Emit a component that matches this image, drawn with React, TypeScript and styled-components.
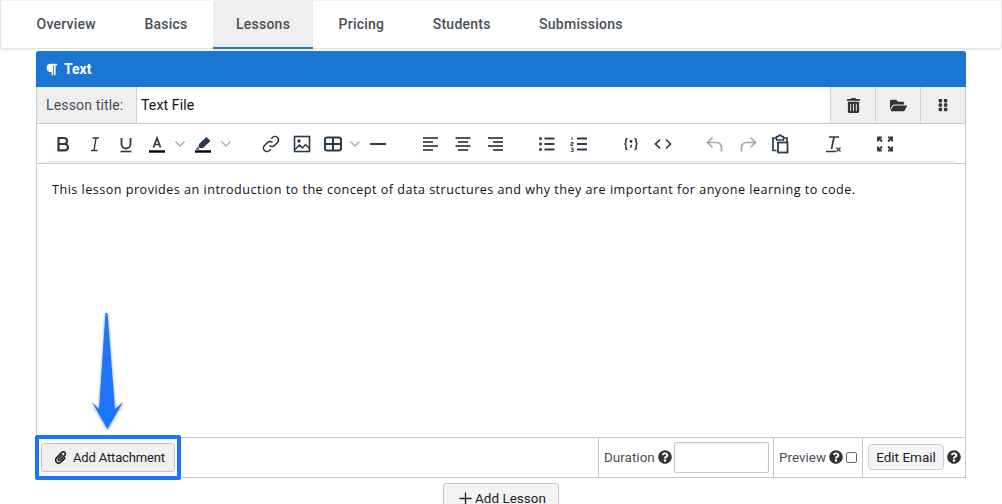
import React from "react";
import styled, { createGlobalStyle } from "styled-components";
import {
  FaFolderOpen,
  FaGripVertical,
  FaParagraph,
  FaPaperclip,
  FaQuestionCircle,
  FaTrashAlt,
} from "react-icons/fa";
import { Plus } from "lucide-react";

const GlobalStyle = createGlobalStyle`
  html, body {
    margin: 0;
    padding: 0;
    background: #fff;
    overflow: hidden;
  }
  body {
    font-family: Roboto, "Liberation Sans", sans-serif;
    color: #212529;
  }
`;

const INK = "#2c3a4b";

const Svg = ({ children, w = 24 }: { children: React.ReactNode; w?: number }) => (
  <svg width={w} height={24} viewBox={`0 0 ${w} 24`} fill="none" stroke={INK} strokeWidth={2}>
    {children}
  </svg>
);

const BoldIcon = () => (
  <Svg>
    <path d="M7.5 6h5.500a3 3 0 0 1 0 6H7.500zM7.500 12h6.300a3.200 3.200 0 0 1 0 6.400H7.500z" strokeWidth={2.2} />
  </Svg>
);
const ItalicIcon = () => (
  <Svg>
    <path d="M9.500 6h6.500M8 18.500h6.500M13 6l-2 12.500" strokeWidth={1.4} />
  </Svg>
);
const UnderlineIcon = () => (
  <Svg>
    <path d="M7.500 6v6a4.500 4.500 0 0 0 9 0V6" strokeWidth={1.8} />
    <path d="M6.500 19.500h11" strokeWidth={1.6} />
  </Svg>
);
const TextColorIcon = () => (
  <Svg>
    <path d="M8.500 15.500L12 6l3.500 9.500M9.800 12.500h4.400" strokeWidth={1.7} />
    <path d="M4 19.500h16" stroke="#000" strokeWidth={2.4} />
  </Svg>
);
const MarkerIcon = () => (
  <Svg>
    <path d="M15.500 5l4 4-7.500 7H8.500l-1-1 .5-3z" fill={INK} stroke="none" />
    <path d="M7 15l-2.500 2.500h4z" fill={INK} stroke="none" />
    <path d="M4 19.500h16" stroke="#000" strokeWidth={2.4} />
  </Svg>
);
const Chevron = () => (
  <svg width={12} height={24} viewBox="0 0 12 24" fill="none" stroke="#a4abb3" strokeWidth={1.3}>
    <path d="M1.500 9.500L6 14l4.500-4.500" />
  </svg>
);
const LinkIcon = () => (
  <Svg>
    <path d="M10.500 13.500a3.500 3.500 0 0 0 5 0l3-3a3.500 3.500 0 0 0-5-5l-1.200 1.200" strokeWidth={1.6} />
    <path d="M13.500 10.500a3.500 3.500 0 0 0-5 0l-3 3a3.500 3.500 0 0 0 5 5l1.200-1.200" strokeWidth={1.6} />
  </Svg>
);
const ImageIcon = () => (
  <Svg>
    <rect x="4.500" y="4.500" width="15" height="15" strokeWidth={1.6} />
    <circle cx="9" cy="9" r="1.700" fill={INK} stroke="none" />
    <path d="M5 17.500l4.500-4.500 3 3 3-3.500 4 4" strokeWidth={1.5} />
  </Svg>
);
const TableIcon = () => (
  <Svg>
    <rect x="4" y="5.500" width="16" height="13" rx="2" strokeWidth={2} />
    <path d="M4 12h16M12 5.500v13" strokeWidth={2} />
  </Svg>
);
const RuleIcon = () => (
  <Svg w={16}>
    <path d="M0 12h16" strokeWidth={2} />
  </Svg>
);
const AlignIcon = ({ kind }: { kind: "left" | "center" | "right" }) => {
  const lines =
    kind === "left"
      ? ["M4 6h15", "M4 10h10", "M4 14h15", "M4 18h10"]
      : kind === "center"
        ? ["M4.500 6h15", "M7 10h10", "M4.500 14h15", "M7 18h10"]
        : ["M5 6h15", "M10 10h10", "M5 14h15", "M10 18h10"];
  return <Svg>{lines.map((d) => <path key={d} d={d} strokeWidth={1.7} />)}</Svg>;
};
const BulletIcon = () => (
  <Svg>
    <path d="M9.500 6.500h10M9.500 12h10M9.500 17.500h10" strokeWidth={1.8} />
    <circle cx="5.500" cy="6.500" r="1.500" fill={INK} stroke="none" />
    <circle cx="5.500" cy="12" r="1.500" fill={INK} stroke="none" />
    <circle cx="5.500" cy="17.500" r="1.500" fill={INK} stroke="none" />
  </Svg>
);
const NumberIcon = () => (
  <Svg>
    <path d="M10 6.500h10M10 12h10M10 17.500h10" strokeWidth={1.8} />
    <path d="M5 5v3M3.800 10.500h2.400v1.500H3.800v1.500h2.400M3.800 16h2.400v3.500H3.800M4.500 17.700h1.700" strokeWidth={0.9} />
  </Svg>
);
const CodeBlockIcon = () => (
  <Svg>
    <path d="M8.500 6.500c-1.500 0-1.700.8-1.700 2v1.700c0 .9-.4 1.800-1.300 1.800.9 0 1.300.9 1.300 1.800v1.700c0 1.200.2 2 1.700 2M15.500 6.500c1.500 0 1.700.8 1.700 2v1.700c0 .9.4 1.800 1.300 1.800-.9 0-1.300.9-1.300 1.800v1.700c0 1.200-.2 2-1.700 2" strokeWidth={1.6} />
    <circle cx="12" cy="9.500" r="1.400" fill={INK} stroke="none" />
    <path d="M12 12.800c1 0 1.400.6 1.100 1.500l-1 1.700h-1l.6-1.500c-.8-.5-.7-1.700.3-1.700z" fill={INK} stroke="none" />
  </Svg>
);
const CodeIcon = () => (
  <Svg>
    <path d="M9 7.500L4.500 12 9 16.500M15 7.500l4.500 4.500-4.500 4.500" strokeWidth={1.7} />
  </Svg>
);
const UndoIcon = () => (
  <Svg>
    <path d="M9.500 5.500L4.500 10.500l5 5" stroke="#a0a7ae" strokeWidth={1.7} />
    <path d="M4.500 10.500h9a5 5 0 0 1 5 5v4" stroke="#a0a7ae" strokeWidth={1.7} />
  </Svg>
);
const RedoIcon = () => (
  <Svg>
    <path d="M14.500 5.500l5 5-5 5" stroke="#a0a7ae" strokeWidth={1.7} />
    <path d="M19.500 10.500h-9a5 5 0 0 0-5 5v4" stroke="#a0a7ae" strokeWidth={1.7} />
  </Svg>
);
const PasteIcon = () => (
  <Svg>
    <path d="M8.500 18.500H5V6h3.500M15.500 6H19v4" strokeWidth={1.7} />
    <path d="M8.500 4.500h2a1.500 1.500 0 0 1 3 0h2v3.500h-7z" strokeWidth={1.500} />
    <rect x="10" y="10.500" width="9.500" height="10" strokeWidth={1.800} />
  </Svg>
);
const ClearIcon = () => (
  <Svg>
    <path d="M8 5h10M13 5l-2.500 12" strokeWidth={1.7} />
    <path d="M5 19.500h10" strokeWidth={1.5} />
    <path d="M15.500 15.500l4 4M19.500 15.500l-4 4" strokeWidth={1.3} />
  </Svg>
);
const FullscreenIcon = () => (
  <Svg>
    <path d="M5 9.500V5.500h4M19 9.500V5.500h-4M5 14.500v4h4M19 14.500v4h-4" strokeWidth={1.9} />
    <path d="M5.500 6l3.500 3.500M18.500 6L15 9.500M5.500 18l3.500-3.500M18.500 18L15 14.500" strokeWidth={1.9} />
  </Svg>
);

const tools: { icon: React.ReactNode; width: number; gap?: number }[] = [
  { icon: <BoldIcon />, width: 32 },
  { icon: <ItalicIcon />, width: 31 },
  { icon: <UnderlineIcon />, width: 32 },
  { icon: <TextColorIcon />, width: 30 },
  { icon: <Chevron />, width: 16 },
  { icon: <MarkerIcon />, width: 30 },
  { icon: <Chevron />, width: 15 },
  { icon: <LinkIcon />, width: 31, gap: 22 },
  { icon: <ImageIcon />, width: 32 },
  { icon: <TableIcon />, width: 30 },
  { icon: <Chevron />, width: 13 },
  { icon: <RuleIcon />, width: 33 },
  { icon: <AlignIcon kind="left" />, width: 32, gap: 21 },
  { icon: <AlignIcon kind="center" />, width: 32 },
  { icon: <AlignIcon kind="right" />, width: 31 },
  { icon: <BulletIcon />, width: 32, gap: 21 },
  { icon: <NumberIcon />, width: 31 },
  { icon: <CodeBlockIcon />, width: 32, gap: 21 },
  { icon: <CodeIcon />, width: 32 },
  { icon: <UndoIcon />, width: 32, gap: 20 },
  { icon: <RedoIcon />, width: 33 },
  { icon: <PasteIcon />, width: 32 },
  { icon: <ClearIcon />, width: 32, gap: 21 },
  { icon: <FullscreenIcon />, width: 32, gap: 20 },
];

const tabs = ["Overview", "Basics", "Lessons", "Pricing", "Students", "Submissions"];

const App = () => {
  return (
    <>
      <GlobalStyle />
      <Page>
        <TabBar>
          {tabs.map((tab) => (
            <Tab key={tab} $active={tab === "Lessons"}>
              {tab}
            </Tab>
          ))}
        </TabBar>

        <Panel>
          <PanelHeader>
            <FaParagraph size={13} />
            <span>Text</span>
          </PanelHeader>

          <TitleRow>
            <TitleLabel>Lesson title:</TitleLabel>
            <TitleInput>Text File</TitleInput>
            <TitleAction>
              <FaTrashAlt size={15} />
            </TitleAction>
            <TitleAction>
              <FaFolderOpen size={17} />
            </TitleAction>
            <TitleAction>
              <FaGripVertical size={14} />
            </TitleAction>
          </TitleRow>

          <Toolbar>
            {tools.map((tool, i) => (
              <Tool key={i} $width={tool.width} $gap={tool.gap ?? 0}>
                {tool.icon}
              </Tool>
            ))}
          </Toolbar>

          <Editor>
            This lesson provides an introduction to the concept of data structures and why they are
            important for anyone learning to code.
          </Editor>

          <Footer>
            <AttachCell>
              <AttachButton>
                <FaPaperclip size={13} />
                Add Attachment
              </AttachButton>
              <Highlight />
              <Arrow width="46" height="126" viewBox="0 0 46 126">
                <defs>
                  <filter id="arrowShadow" x="-30%" y="-10%" width="160%" height="120%">
                    <feDropShadow dx="0" dy="1" stdDeviation="1.500" floodColor="#000" floodOpacity="0.45" />
                  </filter>
                </defs>
                <path
                  d="M21.500 0h2L31 96l8-7-15.500 27L8 89l7 7z"
                  fill="#1b75fa"
                  filter="url(#arrowShadow)"
                />
              </Arrow>
            </AttachCell>
            <DurationCell>
              Duration
              <HelpIcon />
              <DurationInput />
            </DurationCell>
            <PreviewCell>
              Preview
              <HelpIcon />
              <PreviewCheck />
            </PreviewCell>
            <EmailCell>
              <EmailButton>Edit Email</EmailButton>
              <HelpIcon />
            </EmailCell>
          </Footer>
        </Panel>

        <AddRow>
          <AddButton>
            <Plus size={19} strokeWidth={1.7} />
            Add Lesson
          </AddButton>
        </AddRow>
      </Page>
    </>
  );
};

const Page = styled.div`
  width: 1002px;
  height: 504px;
  overflow: hidden;
`;

const TabBar = styled.div`
  height: 49px;
  box-sizing: border-box;
  background: #fff;
  border: 1px solid #e6e6e6;
  border-top: 1px solid #f4f4f4;
  border-radius: 0 0 3px 3px;
  box-shadow: 0 1px 2px rgba(0, 0, 0, 0.08);
  padding-left: 13px;
  display: flex;
  gap: 3.4px;
`;

const Tab = styled.div<{ $active: boolean }>`
  height: 48px;
  box-sizing: border-box;
  padding: 0 22.5px;
  display: flex;
  align-items: center;
  font-size: 14px;
  font-weight: 500;
  letter-spacing: 0.25px;
  color: #495057;
  background: ${({ $active }) => ($active ? "#efefef" : "transparent")};
  border-bottom: 2px solid ${({ $active }) => ($active ? "#1976d2" : "transparent")};
`;

const Panel = styled.div`
  width: 930px;
  margin: 2px 0 0 36px;
  box-sizing: border-box;
  border: 1px solid #c8c8c8;
  border-top: none;
  border-bottom: none;
  border-radius: 3px 3px 0 0;
`;

const PanelHeader = styled.div`
  height: 36px;
  margin: 0 -1px;
  padding-left: 9px;
  background: #1976d2;
  color: #fff;
  display: flex;
  align-items: center;
  gap: 6px;
  font-size: 14px;
  font-weight: 700;
  border-radius: 3px 3px 0 0;
`;

const TitleRow = styled.div`
  height: 37px;
  box-sizing: border-box;
  display: flex;
  border-bottom: 1px solid #c8c8c8;
`;

const TitleLabel = styled.div`
  width: 100px;
  box-sizing: border-box;
  padding-left: 9px;
  display: flex;
  align-items: center;
  background: #efefef;
  border-right: 1px solid #d0d0d0;
  font-size: 14px;
  letter-spacing: 0.15px;
  color: #495057;
`;

const TitleInput = styled.div`
  flex: 1;
  padding-left: 4px;
  display: flex;
  align-items: center;
  font-size: 14px;
  letter-spacing: 0.15px;
  color: #111;
`;

const TitleAction = styled.div`
  width: 45px;
  box-sizing: border-box;
  display: flex;
  align-items: center;
  justify-content: center;
  background: #efefef;
  border-left: 1px solid #d0d0d0;
  color: #333;
`;

const Toolbar = styled.div`
  height: 38px;
  box-sizing: border-box;
  margin: 0 10px 1px;
  padding-top: 3px;
  display: flex;
  align-items: center;
  border-bottom: 1px solid #dedede;
`;

const Tool = styled.div<{ $width: number; $gap: number }>`
  width: ${({ $width }) => $width}px;
  margin-left: ${({ $gap }) => $gap}px;
  display: flex;
  justify-content: center;
  flex-shrink: 0;
  svg {
    display: block;
    flex-shrink: 0;
  }
`;

const Editor = styled.div`
  height: 274px;
  box-sizing: border-box;
  border-top: 1px solid #c8c8c8;
  padding: 17px 15px;
  font-family: "Open Sans", sans-serif;
  font-size: 12.6px;
  line-height: 18px;
  letter-spacing: 0.485px;
  color: #111;
`;

const Footer = styled.div`
  height: 41px;
  box-sizing: border-box;
  display: flex;
  align-items: stretch;
  border-top: 1px solid #c8c8c8;
  border-bottom: 1px solid #c8c8c8;
  font-size: 13.5px;
  color: #495057;
`;

const AttachCell = styled.div`
  position: relative;
  flex: 1;
  display: flex;
  align-items: center;
  padding-left: 4px;
`;

const AttachButton = styled.div`
  width: 134px;
  height: 29px;
  box-sizing: border-box;
  display: flex;
  align-items: center;
  gap: 6px;
  padding-left: 12px;
  background: #f0f0f0;
  border: 1px solid #c4c4c4;
  border-radius: 3px;
  font-size: 13px;
  letter-spacing: -0.15px;
  color: #222;
`;

const Highlight = styled.div`
  position: absolute;
  left: -2px;
  top: -3px;
  width: 146px;
  height: 45px;
  box-sizing: border-box;
  border: 4px solid #1b75fa;
  border-radius: 2px;
`;

const Arrow = styled.svg`
  position: absolute;
  left: 47px;
  top: -125px;
`;

const FooterCell = styled.div`
  display: flex;
  align-items: center;
  box-sizing: border-box;
  border-left: 1px solid #c8c8c8;
  padding-bottom: 1px;
`;

const DurationCell = styled(FooterCell)`
  width: 175px;
  padding-left: 5px;
  gap: 2px;
`;

const PreviewCell = styled(FooterCell)`
  width: 89px;
  padding-left: 5px;
  gap: 2px;
`;

const EmailCell = styled(FooterCell)`
  width: 103px;
  padding-left: 5px;
  gap: 2px;
`;

const HelpIcon = styled(FaQuestionCircle).attrs({ size: 14 })`
  color: #333;
  margin-left: 1px;
  flex-shrink: 0;
`;

const DurationInput = styled.div`
  width: 95px;
  height: 31px;
  box-sizing: border-box;
  background: #fff;
  border: 1px solid #c4c4c4;
  border-radius: 2px;
  box-shadow: inset 0 1px 2px rgba(0, 0, 0, 0.06);
`;

const PreviewCheck = styled.div`
  width: 11px;
  height: 11px;
  margin-left: 1px;
  box-sizing: border-box;
  background: #fff;
  border: 1px solid #666;
  border-radius: 2px;
`;

const EmailButton = styled.div`
  width: 76px;
  height: 26px;
  box-sizing: border-box;
  display: flex;
  align-items: center;
  justify-content: center;
  background: #f4f5f7;
  border: 1px solid #cfcfcf;
  border-radius: 4px;
  font-size: 13.5px;
  color: #222;
`;

const AddRow = styled.div`
  display: flex;
  justify-content: center;
  padding-top: 5px;
`;

const AddButton = styled.div`
  width: 116px;
  height: 30px;
  box-sizing: border-box;
  display: flex;
  align-items: center;
  justify-content: center;
  background: #f4f4f4;
  border: 1px solid #c8c8c8;
  border-radius: 3px;
  font-size: 13.5px;
  color: #222;
`;

export default App;
